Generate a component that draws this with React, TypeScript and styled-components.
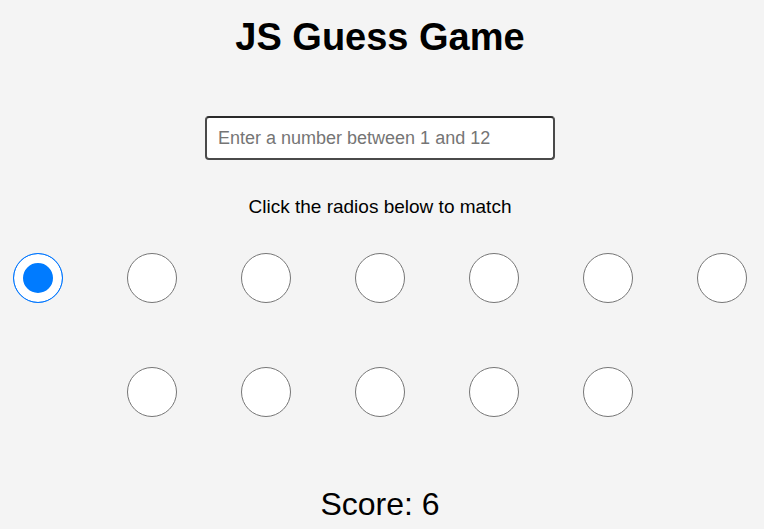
import React, { useState } from 'react'
import styled, { createGlobalStyle } from 'styled-components'

const GlobalStyle = createGlobalStyle`
	body {
		margin: 0;
		background: #f4f4f4;
		font-family: "Liberation Sans", Arial, sans-serif;
		color: #000;
	}
`

const COUNT = 12

export default function App() {
	const [selected, setSelected] = useState(0)
	const [guess, setGuess] = useState('')

	return (
		<>
			<GlobalStyle />
			<Page>
				<Title>JS Guess Game</Title>
				<GuessInput
					type="text"
					placeholder="Enter a number between 1 and 12"
					value={guess}
					onChange={(e) => setGuess(e.target.value)}
				/>
				<Hint>Click the radios below to match</Hint>
				<RadioGrid>
					{Array.from({ length: COUNT }, (_, i) => (
						<Radio
							key={i}
							type="radio"
							name="guess"
							checked={selected === i}
							onChange={() => setSelected(i)}
						/>
					))}
				</RadioGrid>
				<Score>Score: 6</Score>
			</Page>
		</>
	)
}

const Page = styled.div`
	display: flex;
	flex-direction: column;
	align-items: center;
	width: 760px;
`

const Title = styled.h1`
	margin: 15px 0 0;
	font-size: 38px;
	line-height: 44px;
	font-weight: bold;
`

const GuessInput = styled.input`
	margin-top: 57px;
	box-sizing: border-box;
	width: 350px;
	height: 44px;
	padding: 0 11px;
	border: 2px solid #4a4a4a;
	border-top-color: #2a2a2a;
	border-radius: 4px;
	background: #fff;
	font-family: "Liberation Sans", Arial, sans-serif;
	font-size: 18px;
	outline: none;

	&::placeholder {
		color: #757575;
	}
`

const Hint = styled.p`
	margin: 36px 0 0;
	font-size: 19px;
	line-height: 22px;
`

const RadioGrid = styled.div`
	margin-top: 35px;
	display: flex;
	flex-wrap: wrap;
	justify-content: center;
	gap: 64px;
	max-width: 734px;
`

const Radio = styled.input`
	appearance: none;
	margin: 0;
	width: 50px;
	height: 50px;
	border-radius: 50%;
	border: 1px solid #767676;
	background: #fff;
	box-sizing: border-box;
	cursor: pointer;

	&:checked {
		border-color: #0075ff;
		background: #007bff;
		box-shadow: inset 0 0 0 9px #fff;
	}
`

const Score = styled.div`
	margin-top: 69px;
	font-size: 32px;
	line-height: 37px;
`
